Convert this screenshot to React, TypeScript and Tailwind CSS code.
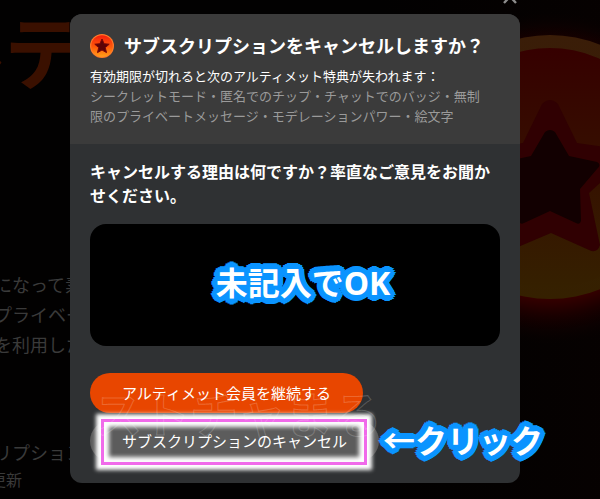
import React from "react";

function StarCoin() {
  return (
    <svg viewBox="0 0 24 24" className="size-6 shrink-0" aria-hidden="true">
      <defs>
        <linearGradient id="coin" x1="0" y1="0" x2="0" y2="1">
          <stop offset="0" stopColor="#f51e0c" />
          <stop offset="0.55" stopColor="#ff5a0a" />
          <stop offset="1" stopColor="#ffa018" />
        </linearGradient>
      </defs>
      <circle cx="12" cy="12" r="12" fill="#ff7a2a" />
      <circle cx="12" cy="12" r="10.8" fill="url(#coin)" />
      <path
        d="M12 5l2.1 4.7 5.1.5-3.9 3.4 1.2 5L12 16l-4.5 2.6 1.2-5-3.9-3.4 5.1-.5z"
        fill="#5c0306"
        stroke="#7c0606"
        strokeWidth="1"
        strokeLinejoin="round"
      />
    </svg>
  );
}

function BigCoin() {
  return (
    <svg viewBox="0 0 340 400" className="h-[400px] w-[340px] shrink-0" aria-hidden="true">
      <defs>
        <radialGradient id="halo">
          <stop offset="0.7" stopColor="#3c0000" />
          <stop offset="0.82" stopColor="#1c0000" />
          <stop offset="1" stopColor="#0a0000" stopOpacity="0" />
        </radialGradient>
        <linearGradient id="rim" x1="0" y1="0" x2="0" y2="1">
          <stop offset="0" stopColor="#3a1d08" />
          <stop offset="1" stopColor="#352000" />
        </linearGradient>
        <linearGradient id="face" x1="0" y1="0" x2="0" y2="1">
          <stop offset="0" stopColor="#360000" />
          <stop offset="0.5" stopColor="#361000" />
          <stop offset="1" stopColor="#352000" />
        </linearGradient>
      </defs>
      <circle cx="170" cy="178" r="166" fill="url(#halo)" />
      <circle cx="170" cy="167" r="132" fill="url(#rim)" />
      <circle cx="170" cy="168" r="120" fill="url(#face)" />
      <path
        d="M162 104Q170 96 178 104L197 143L241 149Q250 152 245 160L209 193L220 245Q217 254 209 250L171 233L131 250Q123 254 120 245L131 193L95 160Q90 152 99 149L143 143Z"
        fill="#300002"
      />
      <path
        d="M165 132Q170 128 175 132L189 156L217 162Q222 165 217 169L200 189L201 221Q200 225 196 223L170 211L144 223Q140 225 139 221L140 189L123 169Q118 165 123 162L151 156Z"
        fill="#120001"
      />
    </svg>
  );
}

function PageBehind() {
  return (
    <div
      aria-hidden="true"
      className="absolute inset-0 flex justify-between overflow-hidden bg-[#020101] text-[#3a3a3a]"
    >
      <div className="flex w-[84px] flex-col items-end whitespace-nowrap text-lg leading-[30px]">
        <p className="mt-2 text-[80px] leading-[88px] font-bold text-[#3a1000]">ルテ</p>
        <div className="mt-[174px]">
          <p>になって素</p>
          <p>プライベー</p>
          <p>を利用した</p>
        </div>
        <p className="mt-[78px]">リプション</p>
        <p className="self-start text-base leading-6">
          <span className="-ml-[10px]">更新</span>
        </p>
      </div>
      <div className="-mr-[120px] bg-linear-to-r from-[#020101] to-[#0a0101]">
        <BigCoin />
      </div>
    </div>
  );
}

const note =
  "pointer-events-none whitespace-nowrap text-[32px] leading-10 font-bold text-white [text-shadow:3px_0_#0a94ff,-3px_0_#0a94ff,0_3px_#0a94ff,0_-3px_#0a94ff,2px_2px_#0a94ff,-2px_2px_#0a94ff,2px_-2px_#0a94ff,-2px_-2px_#0a94ff,6px_0_#0a94ff,-6px_0_#0a94ff,0_6px_#0a94ff,0_-6px_#0a94ff,4px_4px_#0a94ff,-4px_4px_#0a94ff,4px_-4px_#0a94ff,-4px_-4px_#0a94ff,5px_2px_#0a94ff,5px_-2px_#0a94ff,-5px_2px_#0a94ff,-5px_-2px_#0a94ff,2px_5px_#0a94ff,-2px_5px_#0a94ff,2px_-5px_#0a94ff,-2px_-5px_#0a94ff]";

export default function App() {
  return (
    <main
      lang="ja"
      className="relative min-h-screen overflow-hidden pr-2.5 font-['Noto_Sans','Noto_Sans_CJK_JP',sans-serif]"
    >
      <PageBehind />
      <section
        role="dialog"
        aria-modal="true"
        aria-labelledby="dialog-title"
        className="relative mx-auto mt-3.5 max-w-[450px] rounded-xl bg-[#2f3133]"
      >
        <button
          type="button"
          aria-label="閉じる"
          className="absolute right-0.5 -top-[26px] flex size-4 items-center justify-center text-[#8c8c8c]"
        >
          <svg viewBox="0 0 16 16" className="size-4" fill="none" stroke="currentColor" strokeWidth="2.4">
            <path d="M2 2l12 13M14 2L2 15" />
          </svg>
        </button>

        <header className="rounded-t-xl bg-[#3b3b3b] px-5 pt-5 pb-[18px]">
          <div className="flex items-center gap-2.5">
            <StarCoin />
            <h1 id="dialog-title" className="text-lg leading-6 font-bold whitespace-nowrap text-white">
              サブスクリプションをキャンセルしますか？
            </h1>
          </div>
          <p className="mt-2 text-[13px] leading-5 text-white">
            有効期限が切れると次のアルティメット特典が失われます：
          </p>
          <p className="text-[13px] leading-5 text-[#9a9a9a]">
            シークレットモード・匿名でのチップ・チャットでのバッジ・無制
            <br />
            限のプライベートメッセージ・モデレーションパワー・絵文字
          </p>
        </header>

        <form className="px-5 pt-4 pb-[22px]" onSubmit={(e) => e.preventDefault()}>
          <label htmlFor="reason" className="block text-base leading-6 font-bold text-white">
            キャンセルする理由は何ですか？率直なご意見をお聞かせください。
          </label>
          <div className="relative mt-4">
            <textarea id="reason" className="block h-[122px] w-full resize-none rounded-2xl bg-black p-4 text-white" />
            <div className="pointer-events-none absolute inset-0 flex items-center justify-center pb-1 pl-4">
              <span className={note}>未記入でOK</span>
            </div>
          </div>

          <div className="relative mt-[27px] flex flex-col items-start gap-2 text-[15px]">
            <button type="submit" className="h-10 rounded-full bg-[#e84600] px-8 text-white">
              アルティメット会員を継続する
            </button>
            <div className="relative">
              <button type="button" className="h-10 rounded-full bg-[#5c5c5c] px-8 text-white">
                サブスクリプションのキャンセル
              </button>
              <div className="pointer-events-none absolute -top-0.5 -bottom-1 left-[11px] right-3 border-[3px] border-[#f06aea] shadow-[0_0_4px_5px_#fff,inset_0_0_4px_5px_#fff]" />
              <span className={`absolute left-full top-0 ml-1 ${note}`}>←クリック</span>
            </div>
            <span
              aria-hidden="true"
              className="pointer-events-none absolute left-1 top-2.5 text-5xl leading-[64px] font-bold whitespace-nowrap text-transparent [-webkit-text-stroke:1px_#ffffff33]"
            >
              ストチャまる
            </span>
          </div>
        </form>
      </section>
    </main>
  );
}
